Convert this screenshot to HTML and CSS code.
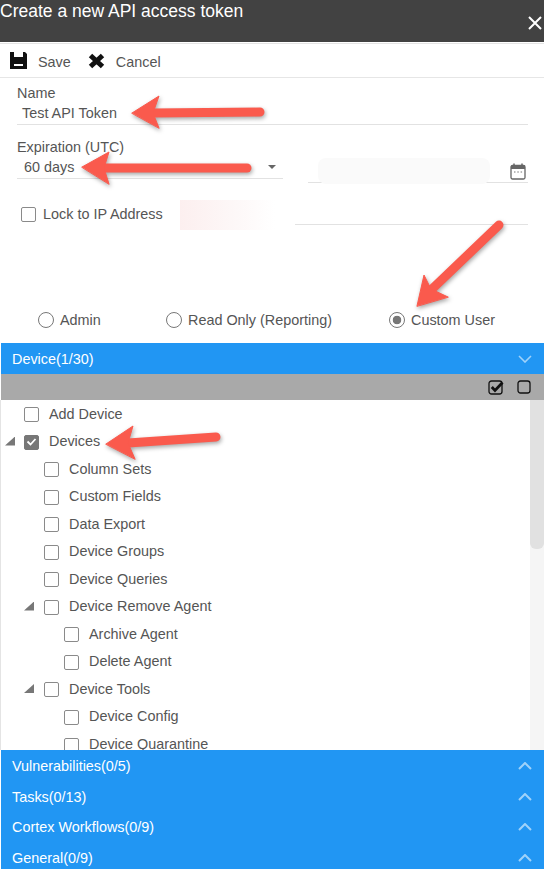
FILE: index.html
```html
<!DOCTYPE html>
<html lang="en">
<head>
  <meta charset="UTF-8" />
  <title>Create a new API access token</title>
  <link rel="stylesheet" href="styles.css">
</head>
<body>
  <div class="page">
    <header class="title-bar">
      <h1>Create a new API access token</h1>
      <svg class="close" width="16" height="16" viewBox="0 0 16 16"><path d="M2 2 L14 14 M14 2 L2 14" stroke="#fff" stroke-width="2" fill="none"/></svg>
    </header>

    <div class="toolbar">
      <svg class="tool-icon" width="17" height="17" viewBox="0 0 17 17"><path d="M0 0 H15 L17 2 V17 H0 Z" fill="#111"/><rect x="4" y="0" width="9" height="5" fill="#fff"/><rect x="4" y="12" width="9" height="2" fill="#fff"/></svg>
      <span class="tool-label save-label">Save</span>
      <svg class="tool-icon" width="17" height="16" viewBox="0 0 17 16"><path d="M2.500 2.500 L14.500 13.500 M14.500 2.500 L2.500 13.500" stroke="#111" stroke-width="5" fill="none"/></svg>
      <span class="tool-label">Cancel</span>
    </div>

    <form class="form">
      <label class="field-label">Name</label>
      <div class="input name-input">Test API Token</div>

      <label class="field-label expiry-label">Expiration (UTC)</label>
      <div class="expiry-row">
        <div class="input select-input">60 days<span class="caret"></span></div>
        <div class="input date-input">
          <span class="date-blur"></span>
          <svg width="16" height="17" viewBox="0 0 16 17"><rect x="1" y="2.500" width="14" height="13.500" rx="1.500" fill="none" stroke="#666" stroke-width="1.300"/><rect x="1" y="2.500" width="14" height="3.500" fill="#666"/><path d="M4 .5 V3 M12 .5 V3" stroke="#666" stroke-width="1.500"/><path d="M4 9 H5.500 M7.300 9 H8.800 M10.600 9 H12.100" stroke="#777" stroke-width="1.200"/></svg>
        </div>
      </div>

      <div class="ip-row">
        <span class="box ip-box"></span>
        <span class="ip-label">Lock to IP Address</span>
        <span class="ip-blur"></span>
        <span class="ip-line"></span>
      </div>

      <div class="roles">
        <span class="role role-admin"><i class="radio"></i>Admin</span>
        <span class="role role-read"><i class="radio"></i>Read Only (Reporting)</span>
        <span class="role role-custom"><i class="radio on"></i>Custom User</span>
      </div>
    </form>

    <div class="panel-head">
      <span>Device(1/30)</span>
      <svg class="chevron" width="14" height="8" viewBox="0 0 14 8"><path d="M1 1 L7 7 L13 1" stroke="#9fd2fa" stroke-width="1.600" fill="none"/></svg>
    </div>
    <div class="bulk-bar">
      <svg width="16" height="15" viewBox="0 0 16 15"><rect x="1" y="1" width="13" height="13" rx="2.500" fill="none" stroke="#111" stroke-width="1.300"/><path d="M3.800 7 L7 10.500 L14.500 2.500" stroke="#111" stroke-width="2.800" fill="none"/></svg>
      <svg width="14" height="14" viewBox="0 0 14 14"><rect x="1" y="1" width="12" height="12" rx="2.500" fill="none" stroke="#111" stroke-width="1.300"/></svg>
    </div>

    <div class="tree-wrap">
      <ul class="tree">
        <li class="l1"><span class="box"></span>Add Device</li>
        <li class="l1"><i class="tri"></i><span class="box checked"><svg width="15" height="15" viewBox="0 0 15 15"><path d="M3.500 7.500 L6.500 10.500 L11.500 5" stroke="#fff" stroke-width="1.800" fill="none"/></svg></span>Devices</li>
        <li class="l2"><span class="box"></span>Column Sets</li>
        <li class="l2"><span class="box"></span>Custom Fields</li>
        <li class="l2"><span class="box"></span>Data Export</li>
        <li class="l2"><span class="box"></span>Device Groups</li>
        <li class="l2"><span class="box"></span>Device Queries</li>
        <li class="l2"><i class="tri"></i><span class="box"></span>Device Remove Agent</li>
        <li class="l3"><span class="box"></span>Archive Agent</li>
        <li class="l3"><span class="box"></span>Delete Agent</li>
        <li class="l2"><i class="tri"></i><span class="box"></span>Device Tools</li>
        <li class="l3"><span class="box"></span>Device Config</li>
        <li class="l3 last"><span class="box"></span>Device Quarantine</li>
      </ul>
      <div class="scroll-track"><div class="scroll-thumb"></div></div>
    </div>

    <div class="panel-head closed">
      <span>Vulnerabilities(0/5)</span>
      <svg class="chevron" width="14" height="8" viewBox="0 0 14 8"><path d="M1 7 L7 1 L13 7" stroke="#9fd2fa" stroke-width="2" fill="none"/></svg>
    </div>
    <div class="panel-head closed">
      <span>Tasks(0/13)</span>
      <svg class="chevron" width="14" height="8" viewBox="0 0 14 8"><path d="M1 7 L7 1 L13 7" stroke="#9fd2fa" stroke-width="2" fill="none"/></svg>
    </div>
    <div class="panel-head closed">
      <span>Cortex Workflows(0/9)</span>
      <svg class="chevron" width="14" height="8" viewBox="0 0 14 8"><path d="M1 7 L7 1 L13 7" stroke="#9fd2fa" stroke-width="2" fill="none"/></svg>
    </div>
    <div class="panel-head closed">
      <span>General(0/9)</span>
      <svg class="chevron" width="14" height="8" viewBox="0 0 14 8"><path d="M1 7 L7 1 L13 7" stroke="#9fd2fa" stroke-width="2" fill="none"/></svg>
    </div>

    <!-- red annotation arrows drawn over the screen -->
    <svg class="arrows" width="544" height="869" viewBox="0 0 544 869">
      <g fill="#fa5a4d" stroke="#fa5a4d" stroke-linecap="round" stroke-linejoin="round">
        <path d="M152 113 L260 112" stroke-width="9" fill="none"/>
        <path d="M132 113 L159 96 L153 113 L159 128 Z" stroke-width="1"/>
        <path d="M103 168 L247 168" stroke-width="9" fill="none"/>
        <path d="M82 167 L109 152 L104 168 L109 184 Z" stroke-width="1"/>
        <path d="M430 291 L499 225" stroke-width="9" fill="none"/>
        <path d="M417 306 L424 275 L431 289 L448 297 Z" stroke-width="1"/>
        <path d="M128 443 L216 437" stroke-width="9" fill="none"/>
        <path d="M106 444 L133 426 L128 443 L135 459 Z" stroke-width="1"/>
      </g>
    </svg>
  </div>
</body>
</html>
```

FILE: styles.css
```css
html, body {
  margin: 0;
  padding: 0;
  background: #fff;
}
body {
  font-family: "Liberation Sans", Arial, sans-serif;
  font-size: 14.400px;
  color: #555;
}
.page {
  position: relative;
  width: 544px;
  height: 869px;
  overflow: hidden;
}
.title-bar {
  display: flex;
  justify-content: space-between;
  height: 42px;
  background: #424242;
  border-bottom: 1px solid #fff;
  box-shadow: 0 1px 0 #e4e4e4;
}
.title-bar h1 {
  margin: 0;
  font-size: 17.500px;
  font-weight: normal;
  line-height: 23px;
  color: #fff;
}
.close {
  margin: 15px 1px 0 0;
}
.toolbar {
  display: flex;
  align-items: center;
  height: 33px;
  margin-top: 1px;
  padding-left: 10px;
  border-bottom: 1px solid #e6e6e6;
}
.tool-label {
  margin-left: 11px;
  padding-top: 2px;
}
.save-label {
  margin-right: 17px;
}
.form {
  height: 265px;
  padding: 7px 16px 0 17px;
  box-sizing: border-box;
}
.field-label {
  display: block;
  height: 16px;
  line-height: 16px;
}
.expiry-label {
  margin-top: 14px;
}
.input {
  height: 23px;
  line-height: 25px;
  border-bottom: 1px solid #e2e2e2;
}
.name-input {
  padding-left: 5px;
}
.expiry-row {
  display: flex;
  gap: 25px;
  align-items: flex-start;
}
.select-input {
  position: relative;
  width: 259px;
  padding-left: 7px;
}
.caret {
  position: absolute;
  right: 7px;
  top: 10px;
  border-left: 4px solid transparent;
  border-right: 4px solid transparent;
  border-top: 4px solid #666;
}
.date-input {
  position: relative;
  flex: 1;
  height: 28px;
  display: flex;
  justify-content: flex-end;
  padding: 8px 2px 0 0;
  box-sizing: border-box;
}
.date-blur {
  position: absolute;
  left: 10px;
  top: 3px;
  width: 172px;
  height: 26px;
  background: #fafafa;
  border-radius: 8px;
}
.ip-row {
  position: relative;
  display: flex;
  align-items: center;
  height: 24px;
  margin-top: 18px;
}
.ip-box {
  margin: 2px 0 0 4px;
}
.ip-label {
  margin-left: 7px;
  position: relative;
  top: 1px;
}
.ip-blur {
  position: absolute;
  left: 163px;
  top: -1px;
  width: 95px;
  height: 30px;
  background: linear-gradient(90deg, #fcefef, #fdf8f8 60%, #fff);
}
.ip-line {
  position: absolute;
  left: 278px;
  right: 0;
  bottom: 0;
  border-bottom: 1px solid #e2e2e2;
}
.roles {
  display: flex;
  height: 20px;
  margin-top: 85px;
  margin-left: 21px;
}
.role {
  display: flex;
  align-items: center;
  gap: 6px;
}
.role-admin {
  width: 128px;
}
.role-read {
  width: 223px;
}
.radio {
  display: block;
  width: 16px;
  height: 16px;
  box-sizing: border-box;
  border: 1.500px solid #777;
  border-radius: 50%;
  background: #fff;
}
.radio.on {
  background: radial-gradient(circle, #777 0, #777 4px, #fff 4.600px);
}
.panel-head {
  display: flex;
  justify-content: space-between;
  align-items: center;
  height: 31px;
  margin-left: 1px;
  padding: 0 12px 0 11px;
  background: #2196f3;
  color: #fff;
}
.panel-head.closed {
  height: 30.700px;
  padding-top: 1px;
  box-sizing: border-box;
}
.bulk-bar {
  display: flex;
  justify-content: flex-end;
  align-items: center;
  gap: 13px;
  height: 26px;
  margin-left: 1px;
  padding-right: 13px;
  background: #a9a9a9;
}
.tree-wrap {
  position: relative;
  height: 350px;
  overflow: hidden;
  border-left: 1px solid #e4e4e4;
}
.tree {
  list-style: none;
  margin: 0;
  padding: 0;
}
.tree li {
  position: relative;
  display: flex;
  align-items: center;
  height: 27.500px;
  color: #555;
}
.tree li.last {
  height: 22px;
  align-items: flex-start;
  padding-top: 6px;
  box-sizing: border-box;
  line-height: 16px;
}
.l1 {
  padding-left: 23px;
}
.l2 {
  padding-left: 43px;
}
.l3 {
  padding-left: 63px;
}
.box {
  display: block;
  flex: none;
  width: 15px;
  height: 15px;
  box-sizing: border-box;
  border: 1.500px solid #8a8a8a;
  border-radius: 2px;
  background: #fff;
}
.tree .box {
  margin: 2px 10px 0 0;
}
.box.checked {
  background: #777;
  border-color: #777;
}
.box.checked svg {
  display: block;
  margin: -1.500px;
}
.tri {
  position: absolute;
  top: 9px;
  width: 10px;
  height: 9px;
  background: #777;
  clip-path: polygon(0 100%, 100% 0, 100% 100%);
}
.l1 .tri {
  left: 4px;
}
.l2 .tri {
  left: 23px;
}
.scroll-track {
  position: absolute;
  top: 0;
  right: 0;
  bottom: 0;
  width: 14px;
  background: #f5f5f5;
}
.scroll-thumb {
  height: 149px;
  background: #e1e1e1;
  border-radius: 0 0 6px 6px;
}
.chevron {
  display: block;
}
.arrows {
  position: absolute;
  left: 0;
  top: 0;
  filter: drop-shadow(1px 2px 2px rgba(0, 0, 0, 0.35));
  pointer-events: none;
}
```
